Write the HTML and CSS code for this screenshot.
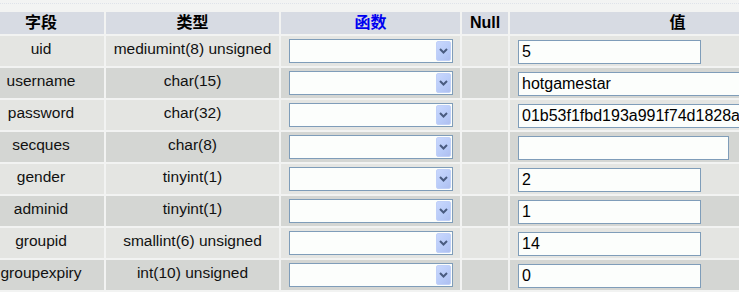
FILE: index.html
```html
<!DOCTYPE html>
<html>
<head>
<meta charset="utf-8">
<link rel="stylesheet" href="styles.css">
</head>
<body>
<div class="topband"></div>
<table class="grid">
  <colgroup>
    <col class="c-field"><col class="c-type"><col class="c-func"><col class="c-null"><col class="c-val">
  </colgroup>
  <thead>
    <tr>
      <th>字段</th><th>类型</th><th class="blue">函数</th><th>Null</th><th>值</th>
    </tr>
  </thead>
  <tbody>
    <tr class="odd">
      <td class="txt">uid</td><td class="txt">mediumint(8) unsigned</td>
      <td><div class="sel"><span class="btn"><svg width="9" height="6" viewBox="0 0 9 6"><polyline points="1,1 4.5,4.5 8,1" fill="none" stroke="#4a5c80" stroke-width="2"/></svg></span></div></td>
      <td></td><td><input class="val" type="text" value="5"></td>
    </tr>
    <tr class="even">
      <td class="txt">username</td><td class="txt">char(15)</td>
      <td><div class="sel"><span class="btn"><svg width="9" height="6" viewBox="0 0 9 6"><polyline points="1,1 4.5,4.5 8,1" fill="none" stroke="#4a5c80" stroke-width="2"/></svg></span></div></td>
      <td></td><td><input class="val wide" type="text" value="hotgamestar"></td>
    </tr>
    <tr class="odd">
      <td class="txt">password</td><td class="txt">char(32)</td>
      <td><div class="sel"><span class="btn"><svg width="9" height="6" viewBox="0 0 9 6"><polyline points="1,1 4.5,4.5 8,1" fill="none" stroke="#4a5c80" stroke-width="2"/></svg></span></div></td>
      <td></td><td><input class="val wide" type="text" value="01b53f1fbd193a991f74d1828a"></td>
    </tr>
    <tr class="even">
      <td class="txt">secques</td><td class="txt">char(8)</td>
      <td><div class="sel"><span class="btn"><svg width="9" height="6" viewBox="0 0 9 6"><polyline points="1,1 4.5,4.5 8,1" fill="none" stroke="#4a5c80" stroke-width="2"/></svg></span></div></td>
      <td></td><td><input class="val mid" type="text" value=""></td>
    </tr>
    <tr class="odd">
      <td class="txt">gender</td><td class="txt">tinyint(1)</td>
      <td><div class="sel"><span class="btn"><svg width="9" height="6" viewBox="0 0 9 6"><polyline points="1,1 4.5,4.5 8,1" fill="none" stroke="#4a5c80" stroke-width="2"/></svg></span></div></td>
      <td></td><td><input class="val" type="text" value="2"></td>
    </tr>
    <tr class="even">
      <td class="txt">adminid</td><td class="txt">tinyint(1)</td>
      <td><div class="sel"><span class="btn"><svg width="9" height="6" viewBox="0 0 9 6"><polyline points="1,1 4.5,4.5 8,1" fill="none" stroke="#4a5c80" stroke-width="2"/></svg></span></div></td>
      <td></td><td><input class="val" type="text" value="1"></td>
    </tr>
    <tr class="odd">
      <td class="txt">groupid</td><td class="txt">smallint(6) unsigned</td>
      <td><div class="sel"><span class="btn"><svg width="9" height="6" viewBox="0 0 9 6"><polyline points="1,1 4.5,4.5 8,1" fill="none" stroke="#4a5c80" stroke-width="2"/></svg></span></div></td>
      <td></td><td><input class="val" type="text" value="14"></td>
    </tr>
    <tr class="even">
      <td class="txt">groupexpiry</td><td class="txt">int(10) unsigned</td>
      <td><div class="sel"><span class="btn"><svg width="9" height="6" viewBox="0 0 9 6"><polyline points="1,1 4.5,4.5 8,1" fill="none" stroke="#4a5c80" stroke-width="2"/></svg></span></div></td>
      <td></td><td><input class="val" type="text" value="0"></td>
    </tr>
  </tbody>
</table>
</body>
</html>
```
FILE: styles.css
```css
html, body {
  margin: 0;
  padding: 0;
  background: #f3f4f3;
  overflow: hidden;
}
body {
  font-family: "Liberation Sans", Arial, "Noto Sans CJK SC", sans-serif;
  font-size: 15.5px;
  color: #111;
}
.topband {
  height: 3px;
  border-bottom: 1px dotted #dfe3ea;
  margin-bottom: 6px;
}
.grid {
  border-collapse: separate;
  border-spacing: 2px;
  table-layout: fixed;
  width: 871px;
  margin-left: -24px;
  background: #f2f3f2;
}
.c-field { width: 126px; }
.c-type { width: 173px; }
.c-func { width: 179px; }
.c-null { width: 46px; }
.c-val { width: 335px; }
th {
  height: 22px;
  padding: 0;
  line-height: 20px;
  background: #d7dbe3;
  font-family: "Liberation Sans", Arial, "Noto Sans CJK SC", sans-serif;
  font-size: 16px;
  font-weight: bold;
  color: #000;
  text-align: center;
  vertical-align: middle;
}
th.blue { color: #0000f0; }
td {
  height: 30px;
  padding: 0;
  vertical-align: top;
}
tr.odd td { background: #e4e5e2; }
tr.even td { background: #d4d6d3; }
td.txt {
  text-align: center;
  padding-top: 4px;
  box-sizing: border-box;
  white-space: nowrap;
}
.sel {
  position: relative;
  box-sizing: border-box;
  width: 164px;
  height: 24px;
  margin: 3px 0 0 8px;
  border: 1px solid #7f9db9;
  background: #fcfefc;
}
.btn {
  position: absolute;
  right: 1px;
  top: 1px;
  width: 15px;
  height: 20px;
  box-sizing: border-box;
  border: 1px solid #c0d0f8;
  border-radius: 2px;
  background: linear-gradient(135deg, #c8d7fd 0%, #b8cbf8 60%, #aebff0 100%);
  display: flex;
  align-items: center;
  justify-content: center;
}
.btn svg { display: block; }
.val {
  display: block;
  box-sizing: border-box;
  width: 183px;
  height: 24px;
  margin: 4px 0 0 8px;
  padding: 0 3px;
  border: 1px solid #7f9db9;
  background: #fcfefc;
  font-family: "Liberation Sans", Arial, sans-serif;
  font-size: 16px;
  color: #000;
  outline: none;
}
.val.wide { width: 280px; }
.val.mid { width: 211px; }
```
